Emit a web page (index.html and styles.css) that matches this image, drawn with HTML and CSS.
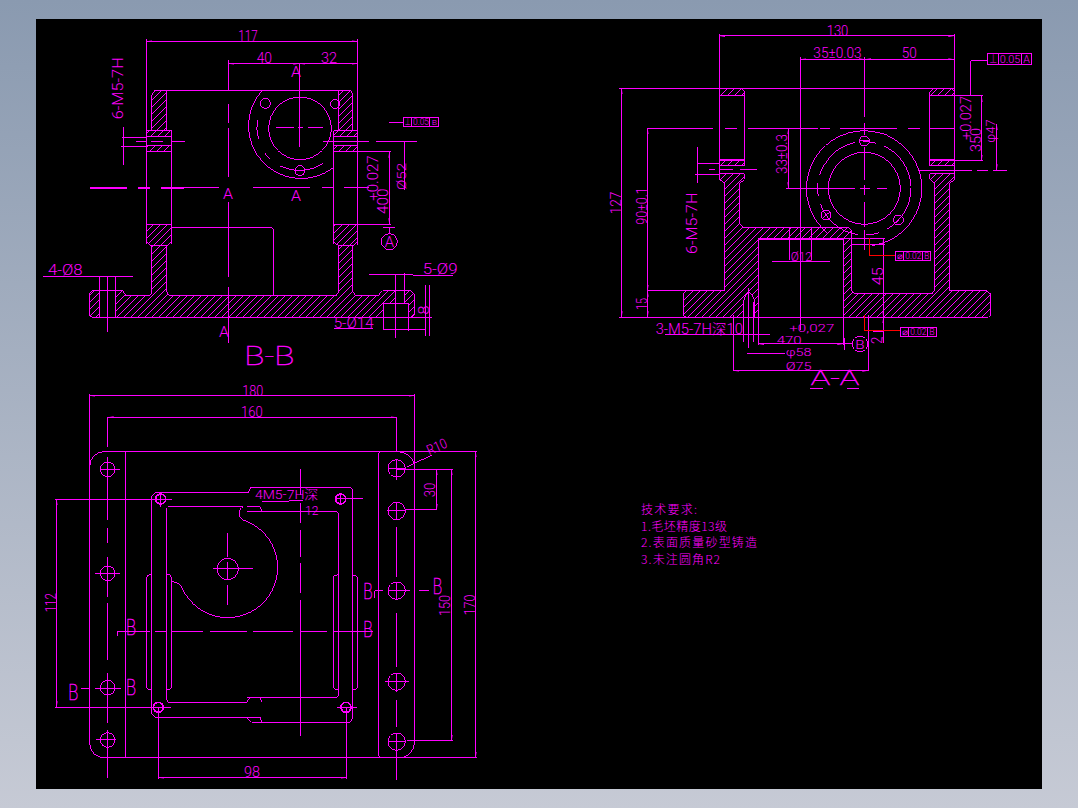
FILE: index.html
```html
<!DOCTYPE html>
<html lang="zh">
<head>
    <meta charset="UTF-8">
    <title>Drawing</title>
    <link rel="stylesheet" href="styles.css">
</head>
<body>
<main class="model-space">
<svg class="sheet" viewBox="36 19 1006 770" xmlns="http://www.w3.org/2000/svg">
    <defs>
        <marker id="arrow" viewBox="0 0 6 2" refX="6" refY="1" markerWidth="6" markerHeight="2" orient="auto-start-reverse">
            <polygon class="arrow-head" points="0,0 6,1 0,2"/>
        </marker>
        <pattern id="hatch" patternUnits="userSpaceOnUse" width="21" height="21">
            <line class="hatch-line" x1="-3" y1="24" x2="24" y2="-3"/>
        </pattern>
    </defs>

    <!-- Section B-B -->
    <g transform="translate(36 20) scale(.333333)">
        <path class="hatched" d="M347 225L357 212H392V332H347Z"/>
        <path class="hatched" d="M908 212H945L950 225V332H908Z"/>
        <path class="hatched" d="M333 333H407V350H333ZM333 378H407V395H333Z"/>
        <path class="hatched" d="M893 333H965V350H893ZM893 378H965V395H893Z"/>
        <path class="hatched" d="M331 613H407V665L392 678H347L331 665Z"/>
        <path class="hatched" d="M893 613H965V665L950 678H908L893 665Z"/>
        <path class="hatched" d="M347 678H392V815L400 828H900L908 815V678H950V815L960 828H1025L1040 812H1125L1135 822V885L1128 892H168L160 885V822L168 812H260L270 828H340L347 820Z"/>
        <path class="blank" d="M192 811H238V893H192ZM1042 852H1118V893H1042ZM1080 811H1105V852H1080Z"/>
        <path class="ln" d="M355 212H945M331 58V672M965 58V676M407 333V672M893 333V672M333 350H407M333 378H407M893 350H965M893 378H965M331 395H407M893 395H1065M333 613H407M893 613H1065M405 622H700Q712 622 713 635V828M192 768V892M238 768V892M215 768V935M1080 765V955M1105 760V852M1042 852H1118V892M1042 852V930M1118 892V932"/>
        <path class="ln" d="M678 212A158 158 0 0 0 893 442M668 358A127 127 0 0 1 664 300M685 398L703 418M733 438A127 127 0 0 0 862 430"/>
        <circle class="ln" cx="792" cy="325" r="94"/>
        <circle class="ln" cx="688" cy="250" r="15"/>
        <circle class="ln" cx="897" cy="252" r="14"/>
        <circle class="ln" cx="792" cy="452" r="15"/>
        <path class="ln" d="M790 130V382M720 322H775M785 322H800M815 322H860M777 452H807M577 120V212M577 252V310M577 325V470M577 545V770M577 802V968"/>
        <path class="ln" d="M258 352H330M255 380H330M300 364H330M345 364H380M405 364H447M862 364H1000M1020 364H1143M263 322V435M1105 364V510M1000 765H1130M1130 767H1250M1170 796V948M1180 796V948M1120 892H1188M1040 928H1170M893 925H1010M20 770H290M445 502H550M650 502H822M858 502H892M925 502H1000"/>
        <path class="ln heavy" d="M162 505H272M305 505H342M375 505H445"/>
        <path class="ln" d="M1060 308H1102M1042 622H1078M1060 622V642"/>
        <circle class="ln" cx="1060" cy="665" r="24"/>
        <rect class="ln" x="1102" y="294" width="106" height="26"/>
        <path class="ln" d="M1128 294V320M1182 294V320"/>
        <g marker-start="url(#arrow)" marker-end="url(#arrow)">
            <line class="ln" x1="331" y1="64" x2="965" y2="64"/>
            <line class="ln" x1="577" y1="131" x2="790" y2="131"/>
            <line class="ln" x1="790" y1="131" x2="965" y2="131"/>
            <line class="ln" x1="1060" y1="395" x2="1060" y2="613"/>
        </g>
        <text class="t" x="607" y="62" font-size="42" textLength="58" lengthAdjust="spacingAndGlyphs">117</text>
        <text class="t" x="662" y="128" font-size="42" textLength="46" lengthAdjust="spacingAndGlyphs">40</text>
        <text class="t" x="855" y="130" font-size="42" textLength="48" lengthAdjust="spacingAndGlyphs">32</text>
        <text class="t" transform="translate(262 298) rotate(-90)" font-size="42" textLength="186" lengthAdjust="spacingAndGlyphs">6-M5-7H</text>
        <text class="t" x="36" y="766" font-size="42" textLength="104" lengthAdjust="spacingAndGlyphs">4-Ø8</text>
        <text class="t" x="1160" y="762" font-size="42" textLength="105" lengthAdjust="spacingAndGlyphs">5-Ø9</text>
        <text class="t" x="893" y="925" font-size="42" textLength="120" lengthAdjust="spacingAndGlyphs">5-Ø14</text>
        <text class="t" transform="translate(1180 884) rotate(-90)" font-size="42" textLength="28" lengthAdjust="spacingAndGlyphs">8</text>
        <text class="t" transform="translate(1027 542) rotate(-90)" font-size="42" textLength="136" lengthAdjust="spacingAndGlyphs">+0.027</text>
        <text class="t" transform="translate(1056 582) rotate(-90)" font-size="42" textLength="76" lengthAdjust="spacingAndGlyphs">400</text>
        <text class="t" transform="translate(1111 510) rotate(-90)" font-size="40" textLength="82" lengthAdjust="spacingAndGlyphs">Ø52</text>
        <text class="t" x="1046" y="680" font-size="42" textLength="28" lengthAdjust="spacingAndGlyphs">A</text>
        <text class="t" x="1106" y="316" font-size="26" textLength="18" lengthAdjust="spacingAndGlyphs">⊥</text>
        <text class="t" x="1131" y="316" font-size="26" textLength="48" lengthAdjust="spacingAndGlyphs">0.05</text>
        <text class="t" x="1187" y="316" font-size="24" textLength="16" lengthAdjust="spacingAndGlyphs">B</text>
        <text class="t" x="765" y="172" font-size="44" textLength="30" lengthAdjust="spacingAndGlyphs">A</text>
        <text class="t" x="561" y="538" font-size="44" textLength="30" lengthAdjust="spacingAndGlyphs">A</text>
        <text class="t" x="765" y="544" font-size="44" textLength="30" lengthAdjust="spacingAndGlyphs">A</text>
        <text class="t" x="549" y="950" font-size="44" textLength="30" lengthAdjust="spacingAndGlyphs">A</text>
        <text class="t big" x="625" y="1034" font-size="80" textLength="150" lengthAdjust="spacingAndGlyphs">B-B</text>
    </g>

    <!-- Section A-A -->
    <g transform="translate(600 20) scale(.333333)">
        <path class="hatched" d="M358 205H425L433 215V228H358Z"/>
        <path class="hatched" d="M990 228V215L1000 205H1055L1063 215V228Z"/>
        <path class="hatched" d="M358 420H433V437H358ZM990 420H1063V437H990Z"/>
        <path class="hatched" d="M358 462H433V478L420 490V612L430 622H745L755 632V812L765 822H995L1003 812V490L990 478V462H1063V478L1050 490V812H1160L1172 822V885L1165 892H258L250 885V820L260 812H375V490L358 478Z"/>
        <path class="blank" d="M475 658H730V893H475ZM430 893V845Q446 790 465 845V893Z"/>
        <path class="ln" d="M58 205H1063M358 42V480M1063 42V480M433 228V420M990 228V420M1063 228V420M358 228H433M990 228H1150M358 422H433M990 422H1150M58 892H1165M358 437H433M358 462H433M990 437H1063M990 462H1063"/>
        <path class="ln" d="M601 112V930M793 112V290M793 310V345M793 380V480M793 495V525M793 545V620M793 630V690M140 325H250M250 325H340M375 325H410M445 325H655M660 325H690M720 325H890M925 325H960M990 325H1063M558 505H765M780 505H810M830 505H860M328 449H345M358 449H400M420 449H470M143 812H258"/>
        <path class="ln" d="M958 451H1115M1130 451H1165M1180 451H1220M475 655H855M755 675H855M570 622V720M635 622V720M515 724H690M290 432H358M285 463H358M293 380V490M195 945H510M400 885V1053M805 885V1053M475 892V975M730 892V975M735 955V990M735 972H758M442 1002H555M446 805V985M432 845V965M462 845V965M850 935H820M630 1105H668M740 1105H778"/>
        <path class="ln" d="M680 637A173 173 0 1 1 815 677"/>
        <circle class="ln dashed" cx="793" cy="505" r="140"/>
        <circle class="ln" cx="793" cy="505" r="108"/>
        <circle class="ln" cx="793" cy="363" r="15"/>
        <circle class="ln" cx="678" cy="585" r="15"/>
        <circle class="ln" cx="895" cy="600" r="15"/>
        <path class="ln" d="M778 363H808M668 595L690 575M885 610L905 590"/>
        <circle class="ln" cx="780" cy="972" r="23"/>
        <path class="ln" d="M1163 122H1112V225"/>
        <rect class="ln" x="1163" y="100" width="132" height="35"/>
        <path class="ln" d="M1195 100V135M1265 100V135"/>
        <rect class="ln" x="886" y="695" width="106" height="27"/>
        <path class="ln" d="M912 695V722M968 695V722"/>
        <rect class="ln" x="901" y="922" width="109" height="28"/>
        <path class="ln" d="M927 922V950M983 922V950"/>
        <g marker-start="url(#arrow)" marker-end="url(#arrow)">
            <line class="ln" x1="358" y1="48" x2="1063" y2="48"/>
            <line class="ln" x1="601" y1="118" x2="795" y2="118"/>
            <line class="ln" x1="795" y1="118" x2="1063" y2="118"/>
            <line class="ln" x1="65" y1="205" x2="65" y2="892"/>
            <line class="ln" x1="143" y1="325" x2="143" y2="812"/>
            <line class="ln" x1="143" y1="812" x2="143" y2="892"/>
            <line class="ln" x1="565" y1="325" x2="565" y2="505"/>
            <line class="ln" x1="1145" y1="228" x2="1145" y2="422"/>
            <line class="ln" x1="1190" y1="312" x2="1190" y2="451"/>
            <line class="ln" x1="850" y1="655" x2="850" y2="892"/>
            <line class="ln" x1="850" y1="892" x2="850" y2="968"/>
            <line class="ln" x1="400" y1="1052" x2="805" y2="1052"/>
            <line class="ln" x1="475" y1="972" x2="730" y2="972"/>
        </g>
        <path class="red" d="M810 655V708H885"/>
        <path class="red" d="M793 885V933H900"/>
        <text class="t" x="680" y="48" font-size="42" textLength="65" lengthAdjust="spacingAndGlyphs">130</text>
        <text class="t" x="640" y="115" font-size="42" textLength="145" lengthAdjust="spacingAndGlyphs">35±0.03</text>
        <text class="t" x="905" y="115" font-size="42" textLength="45" lengthAdjust="spacingAndGlyphs">50</text>
        <text class="t" transform="translate(62 583) rotate(-90)" font-size="42" textLength="68" lengthAdjust="spacingAndGlyphs">127</text>
        <text class="t" transform="translate(140 614) rotate(-90)" font-size="42" textLength="112" lengthAdjust="spacingAndGlyphs">90±0.1</text>
        <text class="t" transform="translate(142 870) rotate(-90)" font-size="42" textLength="36" lengthAdjust="spacingAndGlyphs">15</text>
        <text class="t" transform="translate(560 462) rotate(-90)" font-size="42" textLength="120" lengthAdjust="spacingAndGlyphs">33±0.3</text>
        <text class="t" transform="translate(290 702) rotate(-90)" font-size="42" textLength="184" lengthAdjust="spacingAndGlyphs">6-M5-7H</text>
        <text class="t" transform="translate(1112 360) rotate(-90)" font-size="42" textLength="132" lengthAdjust="spacingAndGlyphs">+0.027</text>
        <text class="t" transform="translate(1143 396) rotate(-90)" font-size="42" textLength="72" lengthAdjust="spacingAndGlyphs">350</text>
        <text class="t" transform="translate(1186 368) rotate(-90)" font-size="40" textLength="70" lengthAdjust="spacingAndGlyphs">φ47</text>
        <text class="t" transform="translate(848 796) rotate(-90)" font-size="42" textLength="54" lengthAdjust="spacingAndGlyphs">45</text>
        <text class="t" transform="translate(846 972) rotate(-90)" font-size="42" textLength="22" lengthAdjust="spacingAndGlyphs">2</text>
        <text class="t" x="572" y="722" font-size="38" textLength="64" lengthAdjust="spacingAndGlyphs">Ø12</text>
        <text class="t" x="167" y="943" font-size="42" textLength="262" lengthAdjust="spacingAndGlyphs">3-M5-7H<tspan class="cjk">深</tspan>10</text>
        <text class="t" x="568" y="935" font-size="34" textLength="135" lengthAdjust="spacingAndGlyphs">+0,027</text>
        <text class="t" x="530" y="973" font-size="34" textLength="75" lengthAdjust="spacingAndGlyphs">470</text>
        <text class="t" x="557" y="1008" font-size="34" textLength="78" lengthAdjust="spacingAndGlyphs">φ58</text>
        <text class="t" x="557" y="1049" font-size="34" textLength="78" lengthAdjust="spacingAndGlyphs">Ø75</text>
        <text class="t" x="766" y="987" font-size="40" textLength="28" lengthAdjust="spacingAndGlyphs">B</text>
        <text class="t big" x="632" y="1094" font-size="60" textLength="146" lengthAdjust="spacingAndGlyphs">A-A</text>
        <text class="t" x="1168" y="130" font-size="34" textLength="24" lengthAdjust="spacingAndGlyphs">⊥</text>
        <text class="t" x="1199" y="130" font-size="34" textLength="62" lengthAdjust="spacingAndGlyphs">0.05</text>
        <text class="t" x="1270" y="130" font-size="34" textLength="20" lengthAdjust="spacingAndGlyphs">A</text>
        <text class="t" x="892" y="717" font-size="26" textLength="16" lengthAdjust="spacingAndGlyphs">⌀</text>
        <text class="t" x="916" y="717" font-size="26" textLength="48" lengthAdjust="spacingAndGlyphs">0.02</text>
        <text class="t" x="973" y="717" font-size="26" textLength="15" lengthAdjust="spacingAndGlyphs">B</text>
        <text class="t" x="906" y="945" font-size="26" textLength="17" lengthAdjust="spacingAndGlyphs">⌀</text>
        <text class="t" x="931" y="945" font-size="26" textLength="48" lengthAdjust="spacingAndGlyphs">0.02</text>
        <text class="t" x="988" y="945" font-size="26" textLength="16" lengthAdjust="spacingAndGlyphs">B</text>
    </g>

    <!-- Plan view -->
    <g transform="translate(40 380) scale(.333333)">
        <path class="ln" d="M148 265Q150 214 200 214H1310M148 265V1085Q150 1134 200 1134H1310M1124 42V1085Q1120 1134 1070 1134M1070 214Q1115 218 1124 255M257 214V1134M1016 225V1122Q1016 1134 1030 1134M1016 225Q1016 214 1030 214"/>
        <path class="ln" d="M148 42V265M203 112V200M1070 112V214M203 230V420M203 445V490M203 530V650M203 670V840M203 880V1030M203 1050V1195M1070 240V300M1070 365V420M1070 440V590M1070 605V660M1070 700V860M1070 880V935M1070 960V1040M1070 1060V1200"/>
        <path class="ln" d="M345 338H625L632 322H930L938 330V1015L930 1027H635L620 1012H345L335 1000V348ZM385 380H610Q598 385 598 402Q600 418 615 422A150 150 0 1 1 428 628Q418 605 395 605V915Q395 930 382 930M380 385V960L385 967H620L630 952H890L896 945V402L890 395H620M620 380H660L665 393M620 952H660L665 967M620 1012H660L665 1027"/>
        <path class="ln" d="M335 585H328Q320 585 320 595V920Q320 930 335 930M938 585Q952 585 952 598V920Q952 930 938 930M896 585H890Q880 585 880 595V920Q880 930 896 930M380 585H390Q395 590 395 605"/>
        <circle class="ln" cx="563" cy="567" r="32"/>
        <path class="ln" d="M520 567H640M563 460V530M563 545V600M563 615V675"/>
        <path class="ln" d="M781 268V345M781 370V430M781 450V530M781 550V640M781 660V1068M232 754H330M345 754H380M395 754H490M510 754H620M640 754H760M780 754H860M880 754H1000M232 754V768M1005 632H1030M1005 632V655M1138 632H1168M122 926H148"/>
        <circle class="ln" cx="203" cy="268" r="22"/>
        <circle class="ln" cx="203" cy="580" r="22"/>
        <circle class="ln" cx="203" cy="923" r="22"/>
        <circle class="ln" cx="203" cy="1080" r="22"/>
        <circle class="ln" cx="1070" cy="265" r="26"/>
        <circle class="ln" cx="1070" cy="393" r="26"/>
        <circle class="ln" cx="1070" cy="632" r="26"/>
        <circle class="ln" cx="1070" cy="905" r="26"/>
        <circle class="ln" cx="1070" cy="1085" r="26"/>
        <path class="ln" d="M180 268H240M165 580H240M165 926H243M168 1080H228M1043 265H1097M1040 393H1098M1044 632H1110M1035 905H1107M1044 1085H1096"/>
        <circle class="ln heavy" cx="362" cy="357" r="15"/>
        <circle class="ln heavy" cx="902" cy="357" r="15"/>
        <circle class="ln heavy" cx="355" cy="982" r="15"/>
        <circle class="ln heavy" cx="918" cy="982" r="15"/>
        <path class="ln" d="M362 335V380M885 357H968M902 338V375M45 358H395M45 982H393M890 982H950M355 982V1197M920 982V1197M665 365L790 362M1124 214H1310M1070 268H1240M1100 1083H1240M1095 390H1190M1100 262L1175 225"/>
        <g marker-start="url(#arrow)" marker-end="url(#arrow)">
            <line class="ln" x1="148" y1="47" x2="1124" y2="47"/>
            <line class="ln" x1="203" y1="112" x2="1070" y2="112"/>
            <line class="ln" x1="50" y1="358" x2="50" y2="982"/>
            <line class="ln" x1="355" y1="1193" x2="920" y2="1193"/>
            <line class="ln" x1="1307" y1="214" x2="1307" y2="1134"/>
            <line class="ln" x1="1235" y1="268" x2="1235" y2="1083"/>
            <line class="ln" x1="1190" y1="268" x2="1190" y2="390"/>
        </g>
        <text class="t" x="607" y="47" font-size="42" textLength="63" lengthAdjust="spacingAndGlyphs">180</text>
        <text class="t" x="603" y="110" font-size="42" textLength="65" lengthAdjust="spacingAndGlyphs">160</text>
        <text class="t" x="612" y="1190" font-size="42" textLength="48" lengthAdjust="spacingAndGlyphs">98</text>
        <text class="t" x="645" y="358" font-size="38" textLength="190" lengthAdjust="spacingAndGlyphs">4M5-7H<tspan class="cjk">深</tspan></text>
        <text class="t" x="795" y="404" font-size="38" textLength="40" lengthAdjust="spacingAndGlyphs">12</text>
        <text class="t" transform="translate(48 697) rotate(-90)" font-size="42" textLength="58" lengthAdjust="spacingAndGlyphs">112</text>
        <text class="t" transform="translate(1304 706) rotate(-90)" font-size="42" textLength="62" lengthAdjust="spacingAndGlyphs">170</text>
        <text class="t" transform="translate(1229 708) rotate(-90)" font-size="42" textLength="63" lengthAdjust="spacingAndGlyphs">150</text>
        <text class="t" transform="translate(1186 352) rotate(-90)" font-size="42" textLength="44" lengthAdjust="spacingAndGlyphs">30</text>
        <text class="t" transform="translate(1168 226) rotate(-24)" font-size="42" textLength="62" lengthAdjust="spacingAndGlyphs">R10</text>
        <text class="t big" x="258" y="765" font-size="64" textLength="30" lengthAdjust="spacingAndGlyphs">B</text>
        <text class="t big" x="970" y="770" font-size="64" textLength="28" lengthAdjust="spacingAndGlyphs">B</text>
        <text class="t big" x="970" y="656" font-size="64" textLength="28" lengthAdjust="spacingAndGlyphs">B</text>
        <text class="t big" x="1178" y="642" font-size="64" textLength="28" lengthAdjust="spacingAndGlyphs">B</text>
        <text class="t big" x="85" y="960" font-size="64" textLength="30" lengthAdjust="spacingAndGlyphs">B</text>
        <text class="t big" x="258" y="945" font-size="64" textLength="30" lengthAdjust="spacingAndGlyphs">B</text>
    </g>

    <!-- Notes -->
    <g class="notes">
        <text class="t note" x="641" y="514" textLength="56">技术要求:</text>
        <text class="t note" x="641" y="531" textLength="86">1.毛坯精度13级</text>
        <text class="t note" x="641" y="547" textLength="116">2.表面质量砂型铸造</text>
        <text class="t note" x="641" y="564" textLength="79">3.未注圆角R2</text>
    </g>
</svg>
</main>
</body>
</html>
```

FILE: styles.css
```css
html, body {
    margin: 0;
    padding: 0;
}

body {
    height: 808px;
    box-sizing: border-box;
    padding: 19px 36px 19px 36px;
    background: linear-gradient(180deg, #8a9ab0 0%, #c6cad5 100%);
    overflow: hidden;
}

.model-space {
    background-color: #000;
    height: 770px;
}

.sheet {
    display: block;
    width: 1006px;
    height: 770px;
}

.ln {
    fill: none;
    stroke: #ff00ff;
    stroke-width: 3;
    shape-rendering: crispEdges;
}

.heavy {
    stroke-width: 5;
}

.dashed {
    stroke-dasharray: 150 25 40 25;
}

.red {
    fill: none;
    stroke: #ff0000;
    stroke-width: 3;
    shape-rendering: crispEdges;
}

.hatched {
    fill: url(#hatch);
    stroke: #ff00ff;
    stroke-width: 3;
    shape-rendering: crispEdges;
}

.blank {
    fill: #000;
    stroke: #ff00ff;
    stroke-width: 3;
    shape-rendering: crispEdges;
}

.hatch-line {
    stroke: #ff00ff;
    stroke-width: 2;
    shape-rendering: crispEdges;
}

.arrow-head {
    fill: #ff00ff;
}

.t {
    fill: #ff00ff;
    font-family: Roboto, "Liberation Sans", "Noto Sans CJK SC", sans-serif;
    font-weight: 300;
}

.big {
    font-weight: 100;
    stroke: #ff00ff;
    stroke-width: 1.2;
}

.cjk {
    font-family: "Noto Sans CJK SC", sans-serif;
}

.note {
    font-family: "Noto Sans CJK SC", sans-serif;
    font-size: 12px;
}
```
